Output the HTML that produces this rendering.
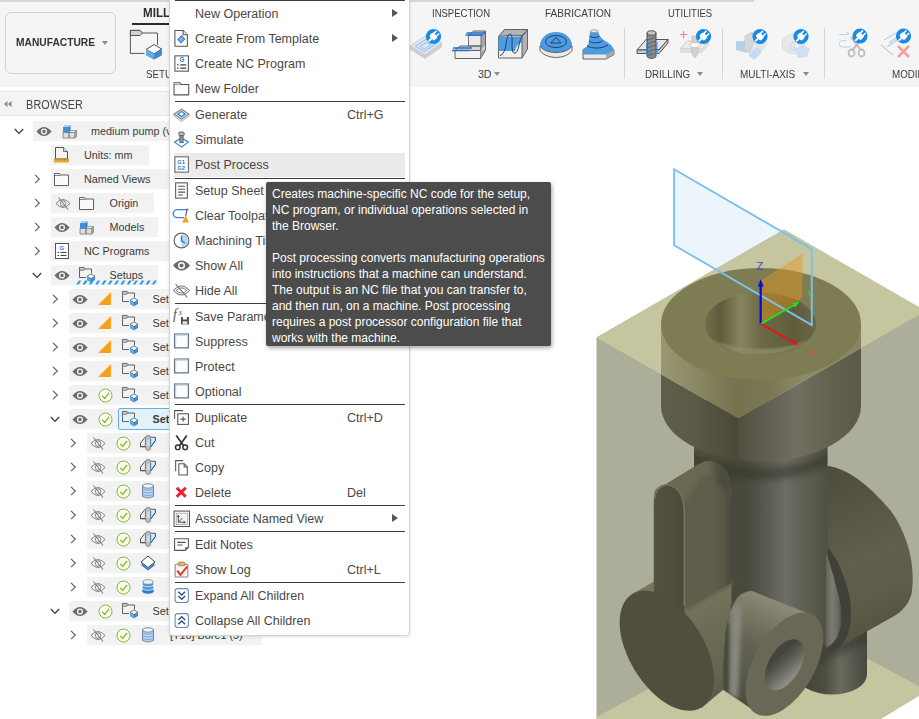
<!DOCTYPE html>
<html>
<head>
<meta charset="utf-8">
<style>
*{box-sizing:border-box;margin:0;padding:0}
html,body{width:919px;height:719px;overflow:hidden;background:#fff}
body{font-family:"Liberation Sans",sans-serif;position:relative;color:#3c3c3c}
.abs{position:absolute}
#topstrip{left:0;top:0;width:754px;height:2px;background:#d6d6d6}
#topstrip2{left:754px;top:0;width:165px;height:2px;background:#f5f5f5}
#toolbar{left:0;top:2px;width:919px;height:85px;background:#f5f5f5}
#wsbtn{left:5px;top:12px;width:111px;height:62px;border:1px solid #d2d2d2;border-radius:6px;background:#f5f5f5}
.tl{position:absolute;white-space:pre;line-height:1}
#brhead{left:0;top:91px;width:170px;height:25px;background:#f4f4f4;border-top:1px solid #e2e2e2;border-bottom:1px solid #e6e6e6}
.row{position:absolute;height:22px;background:#f0f0f0}
.rt{position:absolute;font-size:10.800px;line-height:1;white-space:pre;color:#3a3a3a}
svg{position:absolute;overflow:visible}
#menu{left:169px;top:-4px;width:241px;height:640px;background:#fff;border:1px solid #d4d4d4;border-radius:4px;box-shadow:0 1px 3px rgba(0,0,0,.13)}
.mi{position:absolute;left:25px;font-size:12.5px;line-height:1;white-space:pre;color:#484848}
.ms{position:absolute;left:177px;font-size:12.5px;line-height:1;white-space:pre;color:#484848}
.sep{position:absolute;left:4.500px;width:230.500px;height:1.6px;background:#3a3a3a}
.arr{position:absolute;left:222px;width:0;height:0;border-left:6px solid #555;border-top:4.5px solid transparent;border-bottom:4.5px solid transparent}
#tip{left:266px;top:182px;width:284.500px;height:164px;background:#4c4c4c;border-radius:2px;box-shadow:1px 2px 4px rgba(0,0,0,.35);color:#fff;font-size:12px;line-height:16px;padding:3.700px 0 0 6px;white-space:pre}
</style>
</head>
<body>
<!-- CANVAS -->
<div id="canvas" class="abs" style="left:0;top:0;width:919px;height:719px">
<svg style="left:0;top:0" width="919" height="719" viewBox="0 0 919 719">
<defs>
 <clipPath id="cTop"><path d="M596.5 337.500L784 229.500L925.500 311L738.500 418.500z"/></clipPath>
 <clipPath id="cFront"><path d="M596.500 337.500L738.500 418.500L925.500 311L930 311V730H596.500z"/></clipPath>
 <linearGradient id="gFl" gradientUnits="userSpaceOnUse" x1="661" y1="0" x2="861" y2="0">
  <stop offset="0" stop-color="#5e5d4a"/><stop offset=".15" stop-color="#5b5a47"/><stop offset=".385" stop-color="#4a4939"/>
  <stop offset=".39" stop-color="#504f3f"/><stop offset=".52" stop-color="#5f5e50"/><stop offset=".68" stop-color="#706f62"/>
  <stop offset=".84" stop-color="#64634f"/><stop offset="1" stop-color="#5a5947"/>
 </linearGradient>
 <linearGradient id="gFlT" gradientUnits="userSpaceOnUse" x1="661" y1="0" x2="861" y2="0">
  <stop offset="0" stop-color="#9a9872"/><stop offset=".12" stop-color="#908e68"/><stop offset=".38" stop-color="#74724f"/>
  <stop offset=".55" stop-color="#7a7855"/><stop offset=".72" stop-color="#8e8c68"/><stop offset="1" stop-color="#888660"/>
 </linearGradient>
 <linearGradient id="gHole" gradientUnits="userSpaceOnUse" x1="705" y1="0" x2="816" y2="0">
  <stop offset="0" stop-color="#706e49"/><stop offset=".14" stop-color="#5d5b3a"/><stop offset=".32" stop-color="#87855f"/>
  <stop offset=".5" stop-color="#6d6b46"/><stop offset=".8" stop-color="#5e5c3b"/><stop offset="1" stop-color="#69674a"/>
 </linearGradient>
 <linearGradient id="gBody" gradientUnits="userSpaceOnUse" x1="694" y1="0" x2="828" y2="0">
  <stop offset="0" stop-color="#525140"/><stop offset=".28" stop-color="#48473b"/><stop offset=".42" stop-color="#4c4b40"/>
  <stop offset=".68" stop-color="#6d6d65"/><stop offset=".85" stop-color="#5e5d51"/><stop offset="1" stop-color="#504f44"/>
 </linearGradient>
 <linearGradient id="gRibS" gradientUnits="userSpaceOnUse" x1="684" y1="0" x2="732" y2="0">
  <stop offset="0" stop-color="#5f5e4b"/><stop offset=".6" stop-color="#5f5e4a"/><stop offset=".85" stop-color="#575645"/><stop offset="1" stop-color="#48473a"/>
 </linearGradient>
 <linearGradient id="gRibF" gradientUnits="userSpaceOnUse" x1="654" y1="0" x2="685" y2="0">
  <stop offset="0" stop-color="#53523f"/><stop offset=".6" stop-color="#4f4e3d"/><stop offset="1" stop-color="#4b4a3a"/>
 </linearGradient>
 <linearGradient id="gHcyl" gradientUnits="userSpaceOnUse" x1="835" y1="465" x2="895" y2="615">
  <stop offset="0" stop-color="#4d4c3d"/><stop offset=".3" stop-color="#575645"/><stop offset=".6" stop-color="#605f4d"/><stop offset=".85" stop-color="#5d5c4a"/><stop offset="1" stop-color="#565544"/>
 </linearGradient>
 <linearGradient id="gStub" gradientUnits="userSpaceOnUse" x1="797" y1="0" x2="867" y2="0">
  <stop offset="0" stop-color="#44433a"/><stop offset=".4" stop-color="#4e4d42"/><stop offset=".62" stop-color="#6a6a5e"/><stop offset=".85" stop-color="#55544a"/><stop offset="1" stop-color="#4a493f"/>
 </linearGradient>
 <linearGradient id="gPort" gradientUnits="userSpaceOnUse" x1="800" y1="607" x2="750" y2="707">
  <stop offset="0" stop-color="#8f8e7d"/><stop offset=".1" stop-color="#868573"/><stop offset=".3" stop-color="#747361"/><stop offset=".5" stop-color="#626153"/>
  <stop offset=".75" stop-color="#59584c"/><stop offset="1" stop-color="#4c4b41"/>
 </linearGradient>
 <linearGradient id="gPhole" gradientUnits="userSpaceOnUse" x1="793" y1="640" x2="777" y2="690">
  <stop offset="0" stop-color="#4a493f"/><stop offset=".3" stop-color="#45443b"/><stop offset=".55" stop-color="#66655c"/><stop offset=".78" stop-color="#8e8e86"/><stop offset=".9" stop-color="#74736a"/><stop offset="1" stop-color="#6a695f"/>
 </linearGradient>
 <linearGradient id="gDcyl" gradientUnits="userSpaceOnUse" x1="690" y1="590" x2="740" y2="690">
  <stop offset="0" stop-color="#7a7862"/><stop offset=".35" stop-color="#6d6c56"/><stop offset=".75" stop-color="#66654f"/><stop offset="1" stop-color="#595845"/>
 </linearGradient>
 <filter id="b05" x="-20%" y="-20%" width="140%" height="140%"><feGaussianBlur stdDeviation=".5"/></filter>
 <filter id="b1" x="-30%" y="-30%" width="160%" height="160%"><feGaussianBlur stdDeviation="1"/></filter>
 <filter id="b2" x="-30%" y="-30%" width="160%" height="160%"><feGaussianBlur stdDeviation="2"/></filter>
 <filter id="b3" x="-30%" y="-30%" width="160%" height="160%"><feGaussianBlur stdDeviation="3"/></filter>
 <clipPath id="cRib"><path d="M666.700 483.800L699 464Q708 458.500 717.500 463Q730 470 731.500 489V583L684.500 609V511Q683 488 666.700 483.800z"/></clipPath>
 <clipPath id="cPort"><path d="M812 615L751.400 590.700Q742 592 736.900 598L729.700 611.400L725.500 632L723.500 663V690L756 712z"/></clipPath>
 <linearGradient id="gFil" gradientUnits="userSpaceOnUse" x1="824" y1="0" x2="842" y2="0">
  <stop offset="0" stop-color="#5d5c50"/><stop offset=".45" stop-color="#7c7b6f"/><stop offset=".75" stop-color="#6e6d61"/><stop offset="1" stop-color="#4e4d43"/>
 </linearGradient>
 <clipPath id="cHole"><ellipse cx="760.500" cy="324" rx="55.500" ry="31.500"/></clipPath>
 <clipPath id="cStub"><path d="M797 630H867V674.500A35 20 0 01797 674.500z"/></clipPath>
 <clipPath id="cBody"><path d="M694 400H827.500V560H694z"/></clipPath>
 <clipPath id="cRibF"><path d="M653.800 640V497Q654 486 666.700 484Q684 486 685.300 511V640z"/></clipPath>
</defs>
<path d="M674.100 169.200L811.800 249.100V325L674.100 245.200z" fill="#ecf5fc"/>
<!-- stock box -->
<path d="M596.500 337.500L784 229.500L925.500 311L930 311V730H596.500z" fill="#adae9a"/>
<path d="M596.500 337.500L784 229.500L925.500 311L738.500 418.500z" fill="#c5c59f"/>
<path d="M596.500 717L786 614.700L927.200 690.700L870 725H596.500z" fill="#c5c5a0"/>
<path d="M919 695.700L880.700 719H919z" fill="#fff"/>

<!-- stub cylinder -->
<path d="M797 630H867V674.500A35 20 0 01797 674.500z" fill="url(#gStub)"/>
<g clip-path="url(#cStub)"><path d="M790 655L875 616V640L790 676z" fill="#3b3a32" opacity=".6" filter="url(#b3)"/></g>
<!-- far end of horizontal cylinder -->
<path d="M826 466C846 466.500 870 486 891 511C908 535 916 566 911.500 594C908 607 899 614 888 619.500L826 654.500V466z" fill="url(#gHcyl)"/>
<!-- body cylinder -->
<path d="M694 400H827.500V650H694z" fill="url(#gBody)"/>
<path d="M810 640L828 646L840 647L826 655L810 663z" fill="#444339"/>
<!-- fillet -->
<path d="M827.800 546.700C832 553 835 558 837.900 562.300C842 572 844 577 845.700 582.400C848 590 849.500 595 850 600C851 606 851 612 850.800 618C850.500 624 849.500 629 847.900 633.600C846 639 843 643.500 840 647C836 650 832 652 826 653.600z" fill="#424139"/>
<path d="M826 553C829 560 831 568 833.400 575.700C835 582 836.500 588 837.900 593.500C839.500 599 840.500 604 841.200 609C841.800 614 841.800 620 841.200 624.700C840 630 838.500 634 836.700 638C834 642 831 645 826 648z" fill="url(#gFil)"/>
<g clip-path="url(#cBody)"><path d="M661 405.500A100 56 0 00861 405.500V418A100 56 0 01661 418z" fill="#35342b" opacity=".55" filter="url(#b3)" transform="translate(0 6)"/></g>
<!-- flange (front colours) -->
<g clip-path="url(#cFront)">
 <path d="M661 324V405.500A100 56 0 00861 405.500V324z" fill="url(#gFl)"/>
</g>
<g clip-path="url(#cTop)">
 <path d="M661 324V405.500A100 56 0 00861 405.500V324z" fill="url(#gFlT)"/>
 <ellipse cx="761" cy="324" rx="100" ry="56" fill="#7e7c53"/>
 <ellipse cx="760.500" cy="324" rx="55.500" ry="31.500" fill="url(#gHole)"/>
 <path d="M712 339A55.500 31.500 0 00809 339A58 22 0 01712 339z" fill="#8f8d68" opacity=".8" filter="url(#b1)" clip-path="url(#cHole)"/>
</g>
<!-- horizontal cylinder near side -->
<path d="M684 607L731.500 581V603L726 630L724 689L701.500 708L660 650z" fill="url(#gDcyl)"/>
<path d="M684.500 600L731.500 574V586L684.500 612z" fill="#65644e" filter="url(#b2)"/>
<path d="M632.300 594L654 581.500V620H640z" fill="#77755f"/>
<!-- rib -->
<path d="M666.700 483.800L699 464Q708 458.500 717.500 463Q730 470 731.500 489V583L684.500 609V511Q683 488 666.700 483.800z" fill="url(#gRibS)"/>
<g clip-path="url(#cRib)"><path d="M660 482L699 460Q709 454 720 459Q734 467 736 488L731.500 500Q728 481 715 475Q707 473 699 478L684 505Q680 492 660 490z" fill="#696852" filter="url(#b2)"/></g>
<g clip-path="url(#cRib)"><ellipse cx="737" cy="463" rx="24" ry="30" fill="#33322a" opacity=".5" filter="url(#b3)"/></g>
<path d="M653.800 640V497Q654 486 666.700 484Q684 486 684.500 511V640z" fill="url(#gRibF)"/>
<g clip-path="url(#cRibF)"><path d="M654.600 499Q655 487 666.700 484.500Q683.500 486.500 684.300 511V606" fill="none" stroke="#787763" stroke-width="1.500" filter="url(#b05)"/></g>
<!-- disc -->
<ellipse cx="666.800" cy="650.700" rx="66.400" ry="37.600" transform="rotate(58.700 666.800 650.700)" fill="#504e3c"/>
<!-- small port -->
<path d="M812 615L751.400 590.700Q742 592 736.900 598L729.700 611.400L725.500 632L723.500 663V690L756 712z" fill="url(#gPort)"/>
<g clip-path="url(#cPort)"><path d="M731.500 606L742 604L738 699L729 694z" fill="#87877b" filter="url(#b2)"/><path d="M721 630L728.500 622L728 692L721 690z" fill="#4a4940" filter="url(#b1)"/></g>
<ellipse cx="784.300" cy="664.200" rx="57" ry="30.500" transform="rotate(-60 784.300 664.200)" fill="#696857"/>
<ellipse cx="784.500" cy="664.700" rx="28" ry="15.700" transform="rotate(-60 784.500 664.700)" fill="url(#gPhole)"/>

<!-- planes & axes -->
<path d="M761.500 324L761.500 280L802.300 254L802.300 298z" fill="#e4961c" fill-opacity=".45"/>
<path d="M674.100 169.200L811.800 249.100V325L674.100 245.200z" fill="none" stroke="#7cc1e9" stroke-width="1.900"/>
<path d="M760.700 324.500V285" stroke="#0808e0" stroke-width="2.200"/><path d="M760.700 279.500l-3 7h6z" fill="#0808e0"/>
<path d="M760.700 324L794 305" stroke="#22e422" stroke-width="1.700"/><path d="M800 301.600l-7.500 1.400 2.600 4.600z" fill="#22e422"/>
<path d="M760.700 324L792 341.500" stroke="#ec1414" stroke-width="2"/><path d="M798.500 345l-4.600-5.800-2.800 4.900z" fill="#ec1414"/>
<text x="756.500" y="270" font-size="11" fill="#4a48b8" font-family="Liberation Sans">Z</text>
<text x="807.500" y="295.500" font-size="8" fill="#3fcf60" font-family="Liberation Sans">Y</text>
<text x="808.500" y="356" font-size="9" fill="#e04848" font-family="Liberation Sans">X</text>
</svg>

</div>

<!-- TOOLBAR -->
<div id="topstrip" class="abs"></div><div id="topstrip2" class="abs"></div>
<div id="toolbar" class="abs"></div>
<div id="wsbtn" class="abs"></div>
<div class="tl" style="left:16px;top:37px;font-size:11.5px;font-weight:700;color:#333;transform:scaleX(.89);transform-origin:0 50%">MANUFACTURE</div>
<div class="abs" style="left:102px;top:41px;width:0;height:0;border-top:4px solid #8a8a8a;border-left:3.5px solid transparent;border-right:3.5px solid transparent"></div>
<div class="tl" style="left:143px;top:7px;font-size:12.5px;font-weight:700;color:#2e2e2e;transform:scaleX(.93);transform-origin:0 50%">MILLING</div>
<div class="abs" style="left:131.500px;top:22.500px;width:60px;height:2.700px;background:#2a2a2a"></div>
<div class="tl" style="left:146px;top:69px;font-size:10.5px;color:#3c3c3c;transform:scaleX(.93);transform-origin:0 50%">SETUP</div>
<!-- setup icon -->
<svg style="left:128px;top:28px" width="36" height="34" viewBox="0 0 36 34">
 <path d="M16.500 25.400H2.400V2.400H12L14.500 5H29.500V16.700" fill="none" stroke="#555" stroke-width="1"/>
 <path d="M2.400 2.400H12L14.500 5L12 7.500H2.400z" fill="#d2d2d2" stroke="#555" stroke-width="1"/>
 <path d="M26 16.500l7.700 4.500v6.200l-7.700 4.400-7.800-4.400v-6.200z" fill="#4a9ad8"/>
 <path d="M26 16.500l7.700 4.500-7.700 4.800-7.800-4.300z" fill="#fbfdff" stroke="#444" stroke-width=".9" stroke-linejoin="round"/>
 <path d="M26 25.800l7.700-4.800v6.200l-7.700 4.400z" fill="#3c8ccf"/>
 <path d="M26 25.800l-7.800-4.300v5.700l7.800 4.400z" fill="#62ace4"/>
</svg>
<div class="tl" style="left:432px;top:8px;font-size:10.5px;color:#3c3c3c;transform:scaleX(.905);transform-origin:0 50%">INSPECTION</div>
<div class="tl" style="left:545px;top:8px;font-size:10.5px;color:#3c3c3c;transform:scaleX(.955);transform-origin:0 50%">FABRICATION</div>
<div class="tl" style="left:668px;top:8px;font-size:10.5px;color:#3c3c3c;transform:scaleX(.90);transform-origin:0 50%">UTILITIES</div>
<div class="tl" style="left:478px;top:69px;font-size:10.5px;color:#3c3c3c">3D</div>
<div class="abs" style="left:494px;top:72px;width:0;height:0;border-top:4px solid #8a8a8a;border-left:3px solid transparent;border-right:3px solid transparent"></div>
<div class="tl" style="left:645px;top:69px;font-size:10.5px;color:#3c3c3c;transform:scaleX(.93);transform-origin:0 50%">DRILLING</div>
<div class="abs" style="left:697px;top:72px;width:0;height:0;border-top:4px solid #8a8a8a;border-left:3px solid transparent;border-right:3px solid transparent"></div>
<div class="tl" style="left:740px;top:69px;font-size:10.5px;color:#3c3c3c;transform:scaleX(.95);transform-origin:0 50%">MULTI-AXIS</div>
<div class="abs" style="left:803px;top:72px;width:0;height:0;border-top:4px solid #8a8a8a;border-left:3px solid transparent;border-right:3px solid transparent"></div>
<div class="tl" style="left:892px;top:69px;font-size:10.5px;color:#3c3c3c;transform:scaleX(.93);transform-origin:0 50%">MODIFY</div>
<div class="abs" style="left:624px;top:28px;width:1px;height:51px;background:#d6d6d6"></div>
<div class="abs" style="left:722px;top:28px;width:1px;height:51px;background:#d6d6d6"></div>
<div class="abs" style="left:824px;top:28px;width:1px;height:51px;background:#d6d6d6"></div>
<!--ICONS-->
<svg style="left:0;top:0" width="919" height="90" viewBox="0 0 919 90">
<!-- 1 adaptive faded -->
<g opacity=".85"><path d="M410 46l17-11 15 8-17 12z" fill="#d6e3f0" stroke="#b8c0c8" stroke-width=".8"/><path d="M410 46v3.500l15 9.500v-4zM425 55v4l17-12v-4z" fill="#c4c8cc"/><path d="M415.500 46.200l11-7 9 4.800-11 7.500z" fill="none" stroke="#7db4e6" stroke-width="1"/><path d="M420 46.300l6.500-4 4.500 2.500-6.500 4.300z" fill="none" stroke="#7db4e6" stroke-width=".9"/></g>
<g transform="translate(433.5 36.5)"><circle r="7.600" fill="#168ae6"/><g transform="rotate(45) scale(1.220)" fill="#fff" stroke="none"><rect x="-2.900" y="-2.200" width="5.800" height="4.600" rx="1.400"/><rect x="-2.200" y="-5" width="1.300" height="3.200"/><rect x=".9" y="-5" width="1.300" height="3.200"/><rect x="-.8" y="2" width="1.600" height="3.600"/></g></g>
<!-- 2 steps -->
<path d="M455 50.500l5-4.500h8.500v-10.500l5-4.500h12v19l-5.500 8.500h-25z" fill="#d6d6d6"/>
<path d="M455 50.500h25.500v8H455z" fill="#f1f1f1" stroke="#555" stroke-width=".9"/><path d="M480.500 50.500l5-5.500v-14l-4.500 4.500v7.500l-.5 8v7.500l5-8.500" fill="#a9a9a9"/>
<path d="M468.500 35.500h12.500v10.500h-12.500z" fill="#ececec" stroke="#555" stroke-width=".8"/>
<path d="M455 50.500l5-4.500h21l-.5 4.500M468.500 35.500l5-4.500h12l-4.500 4.500M485.500 31v19l-5 8.500" fill="none" stroke="#555" stroke-width=".9"/>
<path d="M466.500 33h19M465.500 35h17.500M453 48h19M452 50.500h17.500" stroke="#1f72c8" stroke-width="1.500"/>
<!-- 3 parallel -->
<path d="M498.500 36l6-6.500h23v19.500l-5.500 9h-23.500z" fill="#b4b4b4"/>
<path d="M498.500 58V36.500q11-2 23.500-1V58z" fill="#f0f0f0" stroke="#555" stroke-width=".9"/>
<path d="M498.500 36.500l6-7h23l-5.500 6.500M527.500 29.500v19.500l-5.500 9" fill="none" stroke="#555" stroke-width=".9"/>
<path d="M498.500 36.500h23.500v6q-6 1.500-7 8.500h-16.500z" fill="#4f9be0"/>
<path d="M500 55.500c5-2 5.500-8 6.500-14s3-9 4.500-7 1 7 1 12 1.500 8 4 6 3-9 4.500-13 3-6 5-6.500" fill="none" stroke="#1a3f78" stroke-width="1"/>
<!-- 4 dome -->
<path d="M540 46v4.500c3 5 11 7 16.500 7s13-2.500 15.500-7V46z" fill="#eaeaea" stroke="#555" stroke-width=".9"/>
<path d="M540 46c0-8 7-14 16-14s16 6 16 14c-3 4.500-9.500 6.500-16 6.500s-13-2-16-6.500z" fill="#4f9be0"/>
<path d="M540 46c3 4.500 9.500 6.500 16 6.500s13-2 16-6.500" fill="none" stroke="#555" stroke-width=".9"/>
<ellipse cx="556" cy="41.500" rx="10.500" ry="6" fill="none" stroke="#1a3f78" stroke-width="1"/>
<path d="M556 37.500l5 5.500h-10.500z" fill="none" stroke="#1a3f78" stroke-width="1" stroke-linejoin="round"/>
<!-- 5 contour -->
<path d="M583 49.500l8-4.500h14l9 5v4.500l-8 4.500h-23z" fill="#eaeaea" stroke="#555" stroke-width=".9"/><path d="M606 58.500v-4.500l8-4.500v4.500z" fill="#a9a9a9"/>
<path d="M583 49.500c4-1 5.500-5 6-9s.5-7 1.500-9.500c2-1.500 5.500-1.500 7.500 0 1 4 3 7.500 6.500 9.500s8 4.500 9.500 9.500l-8 4.500h-23z" fill="#4f9be0"/>
<ellipse cx="594.200" cy="31.200" rx="3.700" ry="1.500" fill="#e8e8e8" stroke="#777" stroke-width=".6"/>
<path d="M589.500 36c2.500 2 7 2 9.500 0M589 41c3 2.500 9 2.500 13.500 0M587 45.500c4.500 3.500 15 3.500 21-.5" fill="none" stroke="#1a3f78" stroke-width="1"/>
<!-- 6 drill -->
<path d="M637 50l9-10.500h22l-9 10.500z" fill="#e8e8e8" stroke="#444" stroke-width=".9"/><path d="M637 50v3.500h22l9-10.500v-3.500l-9 10.500z" fill="#cfcfcf" stroke="#444" stroke-width=".9"/>
<path d="M647 33v23.500c2 2.500 7 2.500 9 0V33z" fill="#8c8c8c" stroke="#444" stroke-width=".9"/><ellipse cx="651.500" cy="33" rx="4.500" ry="2.200" fill="#c6c6c6" stroke="#444" stroke-width=".9"/>
<path d="M647.500 40l8-3M647.500 44l8-3M647.500 48l8-3M647.500 52l8-3M647.500 56l8-3" stroke="#555" stroke-width=".8"/>
<path d="M646.500 44v9.500h10.500V42" fill="none" stroke="#2f8be0" stroke-width="1"/>
<!-- 7 hole recog faded -->
<g opacity=".5"><path d="M680 49l7-8h22l-7 8z" fill="#e2e2e2" stroke="#888" stroke-width=".8"/><path d="M680 49v4h22l7-8v-4l-7 8z" fill="#c8c8c8"/><path d="M692 36v18l3 4 3-4V36z" fill="#b0b0b0" stroke="#888" stroke-width=".7"/><ellipse cx="695" cy="45" rx="5" ry="2.500" fill="#fff" stroke="#888" stroke-width=".7"/></g>
<path d="M680 34.500h7M683.500 31v7" stroke="#e88a8a" stroke-width="1.200"/>
<g transform="translate(703.5 36.5)"><circle r="7.600" fill="#168ae6"/><g transform="rotate(45) scale(1.220)" fill="#fff" stroke="none"><rect x="-2.900" y="-2.200" width="5.800" height="4.600" rx="1.400"/><rect x="-2.200" y="-5" width="1.300" height="3.200"/><rect x=".9" y="-5" width="1.300" height="3.200"/><rect x="-.8" y="2" width="1.600" height="3.600"/></g></g>
<!-- 8 multiaxis 1 faded -->
<g opacity=".55"><path d="M736 41h11v12l-11-3z" fill="#7ab6ea"/><path d="M747 41l14-5 7 8-12 14-9-5z" fill="#d4dbe2"/><path d="M745 36l7-4 4 3-6 17-6-2z" fill="#c0c0c0" stroke="#999" stroke-width=".6"/><path d="M748 55l10-8 4 5-8 8z" fill="#9cc8ee"/></g>
<g transform="translate(760 36.5)"><circle r="7.600" fill="#168ae6"/><g transform="rotate(45) scale(1.220)" fill="#fff" stroke="none"><rect x="-2.900" y="-2.200" width="5.800" height="4.600" rx="1.400"/><rect x="-2.200" y="-5" width="1.300" height="3.200"/><rect x=".9" y="-5" width="1.300" height="3.200"/><rect x="-.8" y="2" width="1.600" height="3.600"/></g></g>
<!-- 9 multiaxis 2 faded -->
<g opacity=".5"><ellipse cx="793" cy="44" rx="11" ry="9.500" fill="#dcdcdc" stroke="#b0b0b0" stroke-width=".8"/><ellipse cx="796" cy="46" rx="6" ry="4.500" fill="none" stroke="#8fb8dc" stroke-width="1"/><path d="M794 48l10-3 6 4-3 8-9 1z" fill="#a9cdea"/><ellipse cx="797" cy="46" rx="3" ry="2" fill="#fff" stroke="#999" stroke-width=".6"/></g>
<g transform="translate(801 36.5)"><circle r="7.600" fill="#168ae6"/><g transform="rotate(45) scale(1.220)" fill="#fff" stroke="none"><rect x="-2.900" y="-2.200" width="5.800" height="4.600" rx="1.400"/><rect x="-2.200" y="-5" width="1.300" height="3.200"/><rect x=".9" y="-5" width="1.300" height="3.200"/><rect x="-.8" y="2" width="1.600" height="3.600"/></g></g>
<!-- 10 scissors faded -->
<g opacity=".6"><path d="M839 34.500h10l-2-2.500M846 40.500h-3.500a3.200 3.200 0 000 6.500h8" fill="none" stroke="#8fb8dc" stroke-width="1"/><path d="M851 37l9.500 13M863 37l-10.500 13" stroke="#9a9a9a" stroke-width="2"/><ellipse cx="851.500" cy="53" rx="3" ry="3.500" fill="none" stroke="#9a9a9a" stroke-width="1.800"/><ellipse cx="861.500" cy="53" rx="3" ry="3.500" fill="none" stroke="#9a9a9a" stroke-width="1.800"/></g>
<g transform="translate(860 36)"><circle r="7.600" fill="#168ae6"/><g transform="rotate(45) scale(1.220)" fill="#fff" stroke="none"><rect x="-2.900" y="-2.200" width="5.800" height="4.600" rx="1.400"/><rect x="-2.200" y="-5" width="1.300" height="3.200"/><rect x=".9" y="-5" width="1.300" height="3.200"/><rect x="-.8" y="2" width="1.600" height="3.600"/></g></g>
<!-- 11 delete toolpath faded -->
<g opacity=".6"><path d="M881 45l12 10M884 40l12-7c3-1 4 2 2 3.500l-9 6.500M887 47l11-8" fill="none" stroke="#8fb8dc" stroke-width="1.200"/><path d="M898 46l11 11M909 46l-11 11" stroke="#e86a6a" stroke-width="2.600"/></g>
<g transform="translate(903.5 36)"><circle r="7.600" fill="#168ae6"/><g transform="rotate(45) scale(1.220)" fill="#fff" stroke="none"><rect x="-2.900" y="-2.200" width="5.800" height="4.600" rx="1.400"/><rect x="-2.200" y="-5" width="1.300" height="3.200"/><rect x=".9" y="-5" width="1.300" height="3.200"/><rect x="-.8" y="2" width="1.600" height="3.600"/></g></g>
</svg>


<!-- BROWSER -->
<div id="brhead" class="abs"></div>
<svg style="left:3.500px;top:101px" width="8" height="6" viewBox="0 0 8 6"><path d="M3.500 0v6L0 3zM7.500 0v6L4 3z" fill="#858585"/></svg>
<div class="tl" style="left:25.500px;top:98.800px;font-size:12.500px;color:#444;transform:scaleX(.865);transform-origin:0 50%;letter-spacing:.2px">BROWSER</div>
<div class="row" style="left:33px;top:120.5px;width:137px;height:20px;background:#f2f2f2"></div>
<svg style="left:14px;top:128px" width="10" height="7" viewBox="0 0 10 7"><path d="M.8 1l4.200 4.400 4.200-4.400" fill="none" stroke="#3c3c3c" stroke-width="1.300"/></svg>
<svg style="left:36px;top:124.5px" width="16" height="13" viewBox="0 0 16 13"><path d="M.5 6.500q7.500-9 15 0q-7.500 9-15 0z" fill="#6b6b6b"/><circle cx="8" cy="6.500" r="3.100" fill="#f0f0f0"/><circle cx="8" cy="6.500" r="1.700" fill="#6b6b6b"/></svg>
<svg style="left:61.5px;top:123.5px" width="15" height="15" viewBox="0 0 15 15"><path d="M1 3h6v5.500H1z" fill="#3a90e0"/><path d="M1 3l1.500-2h6L7 3z" fill="#a4d4f9"/><path d="M7 3l1.500-2v5.500L7 8.500z" fill="#2a78c8"/><path d="M1 8.500h6V14H1zM7 8.500h6V14H7z" fill="#dedede" stroke="#777" stroke-width=".8"/><path d="M7 8.500l1.500-2h6L13 8.500z" fill="#f0f0f0" stroke="#777" stroke-width=".7"/><path d="M13 8.500l1.500-2V12L13 14z" fill="#b8b8b8" stroke="#777" stroke-width=".7"/></svg>
<div class="rt" style="left:91px;top:125.5px">medium pump (v1</div>
<div class="row" style="left:51px;top:144.5px;width:98px;height:20px;background:#f2f2f2"></div>
<svg style="left:54px;top:147px" width="15" height="16" viewBox="0 0 15 16"><path d="M1.500 .5h8l4 4v7.500h-12z" fill="#f4f4f4" stroke="#555"/><path d="M9.500 .5v4h4" fill="#ddd" stroke="#555" stroke-width=".8"/><rect x=".5" y="12" width="14" height="3" fill="#f0b429" stroke="#c98a10" stroke-width=".6"/><path d="M3 12v1.500M5.500 12v1.500M8 12v1.500M10.500 12v1.500M13 12v1.500" stroke="#8a5a00" stroke-width=".6"/></svg>
<div class="rt" style="left:84px;top:149.5px">Units: mm</div>
<div class="row" style="left:51px;top:168.5px;width:119px;height:20px;background:#f2f2f2"></div>
<svg style="left:34px;top:174px" width="7" height="10" viewBox="0 0 7 10"><path d="M1 .8l4.400 4.200-4.400 4.200" fill="none" stroke="#5a5a5a" stroke-width="1.050"/></svg>
<svg style="left:54px;top:172px" width="15" height="14" viewBox="0 0 15 14"><path d="M.5 1.500h5l1 1.500h8v10.500h-14z" fill="#fafafa" stroke="#606060"/><path d="M.5 3.500h6" stroke="#606060" stroke-width=".8"/></svg>
<div class="rt" style="left:84px;top:173.5px">Named Views</div>
<div class="row" style="left:51px;top:192.5px;width:103px;height:20px;background:#f2f2f2"></div>
<svg style="left:34px;top:198px" width="7" height="10" viewBox="0 0 7 10"><path d="M1 .8l4.400 4.200-4.400 4.200" fill="none" stroke="#5a5a5a" stroke-width="1.050"/></svg>
<svg style="left:55px;top:196.5px" width="16" height="13" viewBox="0 0 16 13"><path d="M1 6.500q7-8 14 0q-7 8-14 0z" fill="none" stroke="#808080" stroke-width="1"/><circle cx="8" cy="6.500" r="2.700" fill="none" stroke="#808080"/><path d="M3.500 .5l9.500 12" stroke="#808080" stroke-width="1.100"/></svg>
<svg style="left:79px;top:196px" width="15" height="14" viewBox="0 0 15 14"><path d="M.5 1.500h5l1 1.500h8v10.500h-14z" fill="#fafafa" stroke="#606060"/><path d="M.5 3.500h6" stroke="#606060" stroke-width=".8"/></svg>
<div class="rt" style="left:109.5px;top:197.5px">Origin</div>
<div class="row" style="left:51px;top:216.5px;width:107px;height:20px;background:#f2f2f2"></div>
<svg style="left:34px;top:222px" width="7" height="10" viewBox="0 0 7 10"><path d="M1 .8l4.400 4.200-4.400 4.200" fill="none" stroke="#5a5a5a" stroke-width="1.050"/></svg>
<svg style="left:54px;top:220.5px" width="16" height="13" viewBox="0 0 16 13"><path d="M.5 6.500q7.500-9 15 0q-7.500 9-15 0z" fill="#6b6b6b"/><circle cx="8" cy="6.500" r="3.100" fill="#f0f0f0"/><circle cx="8" cy="6.500" r="1.700" fill="#6b6b6b"/></svg>
<svg style="left:78.5px;top:219.5px" width="15" height="15" viewBox="0 0 15 15"><path d="M1 3h6v5.500H1z" fill="#3a90e0"/><path d="M1 3l1.500-2h6L7 3z" fill="#a4d4f9"/><path d="M7 3l1.500-2v5.500L7 8.500z" fill="#2a78c8"/><path d="M1 8.500h6V14H1zM7 8.500h6V14H7z" fill="#dedede" stroke="#777" stroke-width=".8"/><path d="M7 8.500l1.500-2h6L13 8.500z" fill="#f0f0f0" stroke="#777" stroke-width=".7"/><path d="M13 8.500l1.500-2V12L13 14z" fill="#b8b8b8" stroke="#777" stroke-width=".7"/></svg>
<div class="rt" style="left:109.5px;top:221.5px">Models</div>
<div class="row" style="left:51px;top:240.5px;width:119px;height:20px;background:#f2f2f2"></div>
<svg style="left:34px;top:246px" width="7" height="10" viewBox="0 0 7 10"><path d="M1 .8l4.400 4.200-4.400 4.200" fill="none" stroke="#5a5a5a" stroke-width="1.050"/></svg>
<svg style="left:55px;top:243px" width="14" height="16" viewBox="0 0 14 16"><rect x=".5" y=".5" width="13" height="15" fill="#fafafa" stroke="#555"/><text x="4.500" y="7" font-size="6" font-weight="700" fill="#2f7fd0" font-family="Liberation Sans">G</text><path d="M2.500 9.500h1.500M5.500 9.500h6M2.500 12.500h1.500M5.500 12.500h6" stroke="#444" stroke-width="1.100"/></svg>
<div class="rt" style="left:84px;top:245.5px">NC Programs</div>
<div class="row" style="left:51px;top:264.5px;width:107px;height:20px;background:#f2f2f2"></div>
<svg style="left:32px;top:272px" width="10" height="7" viewBox="0 0 10 7"><path d="M.8 1l4.200 4.400 4.200-4.400" fill="none" stroke="#3c3c3c" stroke-width="1.300"/></svg>
<svg style="left:54px;top:268.5px" width="16" height="13" viewBox="0 0 16 13"><path d="M.5 6.500q7.500-9 15 0q-7.500 9-15 0z" fill="#6b6b6b"/><circle cx="8" cy="6.500" r="3.100" fill="#f0f0f0"/><circle cx="8" cy="6.500" r="1.700" fill="#6b6b6b"/></svg>
<svg style="left:79px;top:266px" width="17" height="17" viewBox="0 0 17 17"><path d="M7 11.500H.5V1.500h4.500l1.200 1.500h6.300v4.500" fill="none" stroke="#606060"/><path d="M.5 1.500h4.500l1.200 1.500-1.200 1.200H.5z" fill="#cfcfcf" stroke="#606060" stroke-width=".8"/><path d="M12 8l4 2.200v3.800l-4 2.200-4-2.200v-3.800z" fill="#3d8fd6"/><path d="M12 8l4 2.200-4 2.400-4-2.400z" fill="#fbfdff" stroke="#555" stroke-width=".7" stroke-linejoin="round"/><path d="M12 12.600v3.600l-4-2.200v-3.800z" fill="#5aa6e4"/></svg>
<div class="rt" style="left:109.5px;top:269.5px">Setups</div>
<svg style="left:76px;top:280px" width="82" height="5" viewBox="0 0 82 5"><defs><pattern id="hp" width="6.300" height="5" patternUnits="userSpaceOnUse"><path d="M.3 4.500l2.600-4h2.300l-2.600 4z" fill="#1a8fe0"/></pattern></defs><rect width="82" height="5" fill="url(#hp)"/></svg>
<div class="row" style="left:69px;top:288.5px;width:101px;height:20px;background:#f2f2f2"></div>
<svg style="left:52px;top:294px" width="7" height="10" viewBox="0 0 7 10"><path d="M1 .8l4.400 4.200-4.400 4.200" fill="none" stroke="#5a5a5a" stroke-width="1.050"/></svg>
<svg style="left:72px;top:292.5px" width="16" height="13" viewBox="0 0 16 13"><path d="M.5 6.500q7.500-9 15 0q-7.500 9-15 0z" fill="#6b6b6b"/><circle cx="8" cy="6.500" r="3.100" fill="#f0f0f0"/><circle cx="8" cy="6.500" r="1.700" fill="#6b6b6b"/></svg>
<svg style="left:98px;top:292px" width="13" height="13" viewBox="0 0 13 13"><path d="M0 13L13 0v13z" fill="#f5a21c"/></svg>
<svg style="left:122px;top:290px" width="17" height="17" viewBox="0 0 17 17"><path d="M7 11.500H.5V1.500h4.500l1.200 1.500h6.300v4.500" fill="none" stroke="#606060"/><path d="M.5 1.500h4.500l1.200 1.500-1.200 1.200H.5z" fill="#cfcfcf" stroke="#606060" stroke-width=".8"/><path d="M12 8l4 2.200v3.800l-4 2.200-4-2.200v-3.800z" fill="#3d8fd6"/><path d="M12 8l4 2.200-4 2.400-4-2.400z" fill="#fbfdff" stroke="#555" stroke-width=".7" stroke-linejoin="round"/><path d="M12 12.600v3.600l-4-2.200v-3.800z" fill="#5aa6e4"/></svg>
<div class="rt" style="left:152.5px;top:293.5px">Setup</div>
<div class="row" style="left:69px;top:312.5px;width:101px;height:20px;background:#f2f2f2"></div>
<svg style="left:52px;top:318px" width="7" height="10" viewBox="0 0 7 10"><path d="M1 .8l4.400 4.200-4.400 4.200" fill="none" stroke="#5a5a5a" stroke-width="1.050"/></svg>
<svg style="left:72px;top:316.5px" width="16" height="13" viewBox="0 0 16 13"><path d="M.5 6.500q7.500-9 15 0q-7.500 9-15 0z" fill="#6b6b6b"/><circle cx="8" cy="6.500" r="3.100" fill="#f0f0f0"/><circle cx="8" cy="6.500" r="1.700" fill="#6b6b6b"/></svg>
<svg style="left:98px;top:316px" width="13" height="13" viewBox="0 0 13 13"><path d="M0 13L13 0v13z" fill="#f5a21c"/></svg>
<svg style="left:122px;top:314px" width="17" height="17" viewBox="0 0 17 17"><path d="M7 11.500H.5V1.500h4.500l1.200 1.500h6.300v4.500" fill="none" stroke="#606060"/><path d="M.5 1.500h4.500l1.200 1.500-1.200 1.200H.5z" fill="#cfcfcf" stroke="#606060" stroke-width=".8"/><path d="M12 8l4 2.200v3.800l-4 2.200-4-2.200v-3.800z" fill="#3d8fd6"/><path d="M12 8l4 2.200-4 2.400-4-2.400z" fill="#fbfdff" stroke="#555" stroke-width=".7" stroke-linejoin="round"/><path d="M12 12.600v3.600l-4-2.200v-3.800z" fill="#5aa6e4"/></svg>
<div class="rt" style="left:152.5px;top:317.5px">Setup</div>
<div class="row" style="left:69px;top:336.5px;width:101px;height:20px;background:#f2f2f2"></div>
<svg style="left:52px;top:342px" width="7" height="10" viewBox="0 0 7 10"><path d="M1 .8l4.400 4.200-4.400 4.200" fill="none" stroke="#5a5a5a" stroke-width="1.050"/></svg>
<svg style="left:72px;top:340.5px" width="16" height="13" viewBox="0 0 16 13"><path d="M.5 6.500q7.500-9 15 0q-7.500 9-15 0z" fill="#6b6b6b"/><circle cx="8" cy="6.500" r="3.100" fill="#f0f0f0"/><circle cx="8" cy="6.500" r="1.700" fill="#6b6b6b"/></svg>
<svg style="left:98px;top:340px" width="13" height="13" viewBox="0 0 13 13"><path d="M0 13L13 0v13z" fill="#f5a21c"/></svg>
<svg style="left:122px;top:338px" width="17" height="17" viewBox="0 0 17 17"><path d="M7 11.500H.5V1.500h4.500l1.200 1.500h6.300v4.500" fill="none" stroke="#606060"/><path d="M.5 1.500h4.500l1.200 1.500-1.200 1.200H.5z" fill="#cfcfcf" stroke="#606060" stroke-width=".8"/><path d="M12 8l4 2.200v3.800l-4 2.200-4-2.200v-3.800z" fill="#3d8fd6"/><path d="M12 8l4 2.200-4 2.400-4-2.400z" fill="#fbfdff" stroke="#555" stroke-width=".7" stroke-linejoin="round"/><path d="M12 12.600v3.600l-4-2.200v-3.800z" fill="#5aa6e4"/></svg>
<div class="rt" style="left:152.5px;top:341.5px">Setup</div>
<div class="row" style="left:69px;top:360.5px;width:101px;height:20px;background:#f2f2f2"></div>
<svg style="left:52px;top:366px" width="7" height="10" viewBox="0 0 7 10"><path d="M1 .8l4.400 4.200-4.400 4.200" fill="none" stroke="#5a5a5a" stroke-width="1.050"/></svg>
<svg style="left:72px;top:364.5px" width="16" height="13" viewBox="0 0 16 13"><path d="M.5 6.500q7.500-9 15 0q-7.500 9-15 0z" fill="#6b6b6b"/><circle cx="8" cy="6.500" r="3.100" fill="#f0f0f0"/><circle cx="8" cy="6.500" r="1.700" fill="#6b6b6b"/></svg>
<svg style="left:98px;top:364px" width="13" height="13" viewBox="0 0 13 13"><path d="M0 13L13 0v13z" fill="#f5a21c"/></svg>
<svg style="left:122px;top:362px" width="17" height="17" viewBox="0 0 17 17"><path d="M7 11.500H.5V1.500h4.500l1.200 1.500h6.300v4.500" fill="none" stroke="#606060"/><path d="M.5 1.500h4.500l1.200 1.500-1.200 1.200H.5z" fill="#cfcfcf" stroke="#606060" stroke-width=".8"/><path d="M12 8l4 2.200v3.800l-4 2.200-4-2.200v-3.800z" fill="#3d8fd6"/><path d="M12 8l4 2.200-4 2.400-4-2.400z" fill="#fbfdff" stroke="#555" stroke-width=".7" stroke-linejoin="round"/><path d="M12 12.600v3.600l-4-2.200v-3.800z" fill="#5aa6e4"/></svg>
<div class="rt" style="left:152.5px;top:365.5px">Setup</div>
<div class="row" style="left:69px;top:384.5px;width:101px;height:20px;background:#f2f2f2"></div>
<svg style="left:52px;top:390px" width="7" height="10" viewBox="0 0 7 10"><path d="M1 .8l4.400 4.200-4.400 4.200" fill="none" stroke="#5a5a5a" stroke-width="1.050"/></svg>
<svg style="left:72px;top:388.5px" width="16" height="13" viewBox="0 0 16 13"><path d="M.5 6.500q7.500-9 15 0q-7.500 9-15 0z" fill="#6b6b6b"/><circle cx="8" cy="6.500" r="3.100" fill="#f0f0f0"/><circle cx="8" cy="6.500" r="1.700" fill="#6b6b6b"/></svg>
<svg style="left:97.5px;top:387.5px" width="15" height="15" viewBox="0 0 15 15"><circle cx="7.500" cy="7.500" r="6.500" fill="#fbfff4" stroke="#8ab833" stroke-width="1"/><path d="M4.200 7.800l2.500 2.700 4.300-5.500" fill="none" stroke="#8ab833" stroke-width="1.300"/></svg>
<svg style="left:122px;top:386px" width="17" height="17" viewBox="0 0 17 17"><path d="M7 11.500H.5V1.500h4.500l1.200 1.500h6.300v4.500" fill="none" stroke="#606060"/><path d="M.5 1.500h4.500l1.200 1.500-1.200 1.200H.5z" fill="#cfcfcf" stroke="#606060" stroke-width=".8"/><path d="M12 8l4 2.200v3.800l-4 2.200-4-2.200v-3.800z" fill="#3d8fd6"/><path d="M12 8l4 2.200-4 2.400-4-2.400z" fill="#fbfdff" stroke="#555" stroke-width=".7" stroke-linejoin="round"/><path d="M12 12.600v3.600l-4-2.200v-3.800z" fill="#5aa6e4"/></svg>
<div class="rt" style="left:152.5px;top:389.5px">Setup</div>
<div class="row" style="left:69px;top:408.5px;width:101px;height:20px;background:#f2f2f2"></div>
<svg style="left:50px;top:416px" width="10" height="7" viewBox="0 0 10 7"><path d="M.8 1l4.200 4.400 4.200-4.400" fill="none" stroke="#3c3c3c" stroke-width="1.300"/></svg>
<svg style="left:72px;top:412.5px" width="16" height="13" viewBox="0 0 16 13"><path d="M.5 6.500q7.500-9 15 0q-7.500 9-15 0z" fill="#6b6b6b"/><circle cx="8" cy="6.500" r="3.100" fill="#f0f0f0"/><circle cx="8" cy="6.500" r="1.700" fill="#6b6b6b"/></svg>
<svg style="left:97.5px;top:411.5px" width="15" height="15" viewBox="0 0 15 15"><circle cx="7.500" cy="7.500" r="6.500" fill="#fbfff4" stroke="#8ab833" stroke-width="1"/><path d="M4.200 7.800l2.500 2.700 4.300-5.500" fill="none" stroke="#8ab833" stroke-width="1.300"/></svg>
<div class="abs" style="left:118px;top:408px;width:60px;height:22px;background:#e3f1fb;border:1.500px solid #62b0ea;border-radius:2px"></div>
<svg style="left:122px;top:410px" width="17" height="17" viewBox="0 0 17 17"><path d="M7 11.500H.5V1.500h4.500l1.200 1.500h6.300v4.500" fill="none" stroke="#606060"/><path d="M.5 1.500h4.500l1.200 1.500-1.200 1.200H.5z" fill="#cfcfcf" stroke="#606060" stroke-width=".8"/><path d="M12 8l4 2.200v3.800l-4 2.200-4-2.200v-3.800z" fill="#3d8fd6"/><path d="M12 8l4 2.200-4 2.400-4-2.400z" fill="#fbfdff" stroke="#555" stroke-width=".7" stroke-linejoin="round"/><path d="M12 12.600v3.600l-4-2.200v-3.800z" fill="#5aa6e4"/></svg>
<div class="rt" style="left:152.5px;top:413.5px;font-weight:700">Setup</div>
<div class="row" style="left:69px;top:600.5px;width:101px;height:20px;background:#f2f2f2"></div>
<svg style="left:50px;top:608px" width="10" height="7" viewBox="0 0 10 7"><path d="M.8 1l4.200 4.400 4.200-4.400" fill="none" stroke="#3c3c3c" stroke-width="1.300"/></svg>
<svg style="left:72px;top:604.5px" width="16" height="13" viewBox="0 0 16 13"><path d="M.5 6.500q7.500-9 15 0q-7.500 9-15 0z" fill="#6b6b6b"/><circle cx="8" cy="6.500" r="3.100" fill="#f0f0f0"/><circle cx="8" cy="6.500" r="1.700" fill="#6b6b6b"/></svg>
<svg style="left:97.5px;top:603.5px" width="15" height="15" viewBox="0 0 15 15"><circle cx="7.500" cy="7.500" r="6.500" fill="#fbfff4" stroke="#8ab833" stroke-width="1"/><path d="M4.200 7.800l2.500 2.700 4.300-5.500" fill="none" stroke="#8ab833" stroke-width="1.300"/></svg>
<svg style="left:122px;top:602px" width="17" height="17" viewBox="0 0 17 17"><path d="M7 11.500H.5V1.500h4.500l1.200 1.500h6.300v4.500" fill="none" stroke="#606060"/><path d="M.5 1.500h4.500l1.200 1.500-1.200 1.200H.5z" fill="#cfcfcf" stroke="#606060" stroke-width=".8"/><path d="M12 8l4 2.200v3.800l-4 2.200-4-2.200v-3.800z" fill="#3d8fd6"/><path d="M12 8l4 2.200-4 2.400-4-2.400z" fill="#fbfdff" stroke="#555" stroke-width=".7" stroke-linejoin="round"/><path d="M12 12.600v3.600l-4-2.200v-3.800z" fill="#5aa6e4"/></svg>
<div class="rt" style="left:152.5px;top:605.5px">Setup</div>
<div class="row" style="left:87px;top:432.5px;width:83px;height:20px;background:#f2f2f2"></div>
<svg style="left:70px;top:438px" width="7" height="10" viewBox="0 0 7 10"><path d="M1 .8l4.400 4.200-4.400 4.200" fill="none" stroke="#5a5a5a" stroke-width="1.050"/></svg>
<svg style="left:90px;top:436.5px" width="16" height="13" viewBox="0 0 16 13"><path d="M1 6.500q7-8 14 0q-7 8-14 0z" fill="none" stroke="#808080" stroke-width="1"/><circle cx="8" cy="6.500" r="2.700" fill="none" stroke="#808080"/><path d="M3.500 .5l9.500 12" stroke="#808080" stroke-width="1.100"/></svg>
<svg style="left:115.5px;top:435.5px" width="15" height="15" viewBox="0 0 15 15"><circle cx="7.500" cy="7.500" r="6.500" fill="#fbfff4" stroke="#8ab833" stroke-width="1"/><path d="M4.200 7.800l2.500 2.700 4.300-5.500" fill="none" stroke="#8ab833" stroke-width="1.300"/></svg>
<svg style="left:140px;top:435px" width="16" height="16" viewBox="0 0 16 16"><defs><linearGradient id="pl" x1="0" y1="0" x2="1" y2="0"><stop offset="0" stop-color="#e9e9e9"/><stop offset=".6" stop-color="#f4f8fc"/><stop offset="1" stop-color="#c4e0f7"/></linearGradient></defs><path d="M.5 11.700V8L5 2.300H15.500V5.400L10.900 11.700z" fill="url(#pl)" stroke="#555" stroke-width="1" stroke-linejoin="round"/><rect x="5.700" y=".4" width="4.800" height="15" rx="2.300" fill="#d6d6d6" stroke="#777" stroke-width=".8"/><circle cx="8.100" cy="2.800" r="1.300" fill="#e8e8e8" stroke="#777" stroke-width=".6"/><circle cx="8.100" cy="13" r="1.300" fill="#e8e8e8" stroke="#777" stroke-width=".6"/><path d="M5.400 4v7.700M10.700 4v7.700" stroke="#2f8be0" stroke-width="1"/><path d="M.5 11.700H5.400M10.700 11.700h.2l4.600-6.300" fill="none" stroke="#555" stroke-width="1"/></svg>
<div class="row" style="left:87px;top:456.5px;width:83px;height:20px;background:#f2f2f2"></div>
<svg style="left:70px;top:462px" width="7" height="10" viewBox="0 0 7 10"><path d="M1 .8l4.400 4.200-4.400 4.200" fill="none" stroke="#5a5a5a" stroke-width="1.050"/></svg>
<svg style="left:90px;top:460.5px" width="16" height="13" viewBox="0 0 16 13"><path d="M1 6.500q7-8 14 0q-7 8-14 0z" fill="none" stroke="#808080" stroke-width="1"/><circle cx="8" cy="6.500" r="2.700" fill="none" stroke="#808080"/><path d="M3.500 .5l9.500 12" stroke="#808080" stroke-width="1.100"/></svg>
<svg style="left:115.5px;top:459.5px" width="15" height="15" viewBox="0 0 15 15"><circle cx="7.500" cy="7.500" r="6.500" fill="#fbfff4" stroke="#8ab833" stroke-width="1"/><path d="M4.200 7.800l2.500 2.700 4.300-5.500" fill="none" stroke="#8ab833" stroke-width="1.300"/></svg>
<svg style="left:140px;top:459px" width="16" height="16" viewBox="0 0 16 16"><defs><linearGradient id="pl" x1="0" y1="0" x2="1" y2="0"><stop offset="0" stop-color="#e9e9e9"/><stop offset=".6" stop-color="#f4f8fc"/><stop offset="1" stop-color="#c4e0f7"/></linearGradient></defs><path d="M.5 11.700V8L5 2.300H15.500V5.400L10.900 11.700z" fill="url(#pl)" stroke="#555" stroke-width="1" stroke-linejoin="round"/><rect x="5.700" y=".4" width="4.800" height="15" rx="2.300" fill="#d6d6d6" stroke="#777" stroke-width=".8"/><circle cx="8.100" cy="2.800" r="1.300" fill="#e8e8e8" stroke="#777" stroke-width=".6"/><circle cx="8.100" cy="13" r="1.300" fill="#e8e8e8" stroke="#777" stroke-width=".6"/><path d="M5.400 4v7.700M10.700 4v7.700" stroke="#2f8be0" stroke-width="1"/><path d="M.5 11.700H5.400M10.700 11.700h.2l4.600-6.300" fill="none" stroke="#555" stroke-width="1"/></svg>
<div class="row" style="left:87px;top:480.5px;width:83px;height:20px;background:#f2f2f2"></div>
<svg style="left:70px;top:486px" width="7" height="10" viewBox="0 0 7 10"><path d="M1 .8l4.400 4.200-4.400 4.200" fill="none" stroke="#5a5a5a" stroke-width="1.050"/></svg>
<svg style="left:90px;top:484.5px" width="16" height="13" viewBox="0 0 16 13"><path d="M1 6.500q7-8 14 0q-7 8-14 0z" fill="none" stroke="#808080" stroke-width="1"/><circle cx="8" cy="6.500" r="2.700" fill="none" stroke="#808080"/><path d="M3.500 .5l9.500 12" stroke="#808080" stroke-width="1.100"/></svg>
<svg style="left:115.5px;top:483.5px" width="15" height="15" viewBox="0 0 15 15"><circle cx="7.500" cy="7.500" r="6.500" fill="#fbfff4" stroke="#8ab833" stroke-width="1"/><path d="M4.200 7.800l2.500 2.700 4.300-5.500" fill="none" stroke="#8ab833" stroke-width="1.300"/></svg>
<svg style="left:140px;top:483px" width="16" height="16" viewBox="0 0 16 16"><path d="M2.500 3v10.500q5.500 3 11 0V3" fill="#c4dff5" stroke="#6a7a8a" stroke-width=".9"/><ellipse cx="8" cy="3" rx="5.500" ry="2.200" fill="#eef6fd" stroke="#6a7a8a" stroke-width=".9"/><path d="M2.500 6q5.500 3 11 0M2.500 8.700q5.500 3 11 0M2.500 11.400q5.500 3 11 0" fill="none" stroke="#5a9ad6" stroke-width=".9"/></svg>
<div class="row" style="left:87px;top:504.5px;width:83px;height:20px;background:#f2f2f2"></div>
<svg style="left:70px;top:510px" width="7" height="10" viewBox="0 0 7 10"><path d="M1 .8l4.400 4.200-4.400 4.200" fill="none" stroke="#5a5a5a" stroke-width="1.050"/></svg>
<svg style="left:90px;top:508.5px" width="16" height="13" viewBox="0 0 16 13"><path d="M1 6.500q7-8 14 0q-7 8-14 0z" fill="none" stroke="#808080" stroke-width="1"/><circle cx="8" cy="6.500" r="2.700" fill="none" stroke="#808080"/><path d="M3.500 .5l9.500 12" stroke="#808080" stroke-width="1.100"/></svg>
<svg style="left:115.5px;top:507.5px" width="15" height="15" viewBox="0 0 15 15"><circle cx="7.500" cy="7.500" r="6.500" fill="#fbfff4" stroke="#8ab833" stroke-width="1"/><path d="M4.200 7.800l2.500 2.700 4.300-5.500" fill="none" stroke="#8ab833" stroke-width="1.300"/></svg>
<svg style="left:140px;top:507px" width="16" height="16" viewBox="0 0 16 16"><defs><linearGradient id="pl" x1="0" y1="0" x2="1" y2="0"><stop offset="0" stop-color="#e9e9e9"/><stop offset=".6" stop-color="#f4f8fc"/><stop offset="1" stop-color="#c4e0f7"/></linearGradient></defs><path d="M.5 11.700V8L5 2.300H15.500V5.400L10.900 11.700z" fill="url(#pl)" stroke="#555" stroke-width="1" stroke-linejoin="round"/><rect x="5.700" y=".4" width="4.800" height="15" rx="2.300" fill="#d6d6d6" stroke="#777" stroke-width=".8"/><circle cx="8.100" cy="2.800" r="1.300" fill="#e8e8e8" stroke="#777" stroke-width=".6"/><circle cx="8.100" cy="13" r="1.300" fill="#e8e8e8" stroke="#777" stroke-width=".6"/><path d="M5.400 4v7.700M10.700 4v7.700" stroke="#2f8be0" stroke-width="1"/><path d="M.5 11.700H5.400M10.700 11.700h.2l4.600-6.300" fill="none" stroke="#555" stroke-width="1"/></svg>
<div class="row" style="left:87px;top:528.5px;width:83px;height:20px;background:#f2f2f2"></div>
<svg style="left:70px;top:534px" width="7" height="10" viewBox="0 0 7 10"><path d="M1 .8l4.400 4.200-4.400 4.200" fill="none" stroke="#5a5a5a" stroke-width="1.050"/></svg>
<svg style="left:90px;top:532.5px" width="16" height="13" viewBox="0 0 16 13"><path d="M1 6.500q7-8 14 0q-7 8-14 0z" fill="none" stroke="#808080" stroke-width="1"/><circle cx="8" cy="6.500" r="2.700" fill="none" stroke="#808080"/><path d="M3.500 .5l9.500 12" stroke="#808080" stroke-width="1.100"/></svg>
<svg style="left:115.5px;top:531.5px" width="15" height="15" viewBox="0 0 15 15"><circle cx="7.500" cy="7.500" r="6.500" fill="#fbfff4" stroke="#8ab833" stroke-width="1"/><path d="M4.200 7.800l2.500 2.700 4.300-5.500" fill="none" stroke="#8ab833" stroke-width="1.300"/></svg>
<svg style="left:140px;top:531px" width="16" height="16" viewBox="0 0 16 16"><defs><linearGradient id="pl" x1="0" y1="0" x2="1" y2="0"><stop offset="0" stop-color="#e9e9e9"/><stop offset=".6" stop-color="#f4f8fc"/><stop offset="1" stop-color="#c4e0f7"/></linearGradient></defs><path d="M.5 11.700V8L5 2.300H15.500V5.400L10.900 11.700z" fill="url(#pl)" stroke="#555" stroke-width="1" stroke-linejoin="round"/><rect x="5.700" y=".4" width="4.800" height="15" rx="2.300" fill="#d6d6d6" stroke="#777" stroke-width=".8"/><circle cx="8.100" cy="2.800" r="1.300" fill="#e8e8e8" stroke="#777" stroke-width=".6"/><circle cx="8.100" cy="13" r="1.300" fill="#e8e8e8" stroke="#777" stroke-width=".6"/><path d="M5.400 4v7.700M10.700 4v7.700" stroke="#2f8be0" stroke-width="1"/><path d="M.5 11.700H5.400M10.700 11.700h.2l4.600-6.300" fill="none" stroke="#555" stroke-width="1"/></svg>
<div class="row" style="left:87px;top:552.5px;width:83px;height:20px;background:#f2f2f2"></div>
<svg style="left:70px;top:558px" width="7" height="10" viewBox="0 0 7 10"><path d="M1 .8l4.400 4.200-4.400 4.200" fill="none" stroke="#5a5a5a" stroke-width="1.050"/></svg>
<svg style="left:90px;top:556.5px" width="16" height="13" viewBox="0 0 16 13"><path d="M1 6.500q7-8 14 0q-7 8-14 0z" fill="none" stroke="#808080" stroke-width="1"/><circle cx="8" cy="6.500" r="2.700" fill="none" stroke="#808080"/><path d="M3.500 .5l9.500 12" stroke="#808080" stroke-width="1.100"/></svg>
<svg style="left:115.5px;top:555.5px" width="15" height="15" viewBox="0 0 15 15"><circle cx="7.500" cy="7.500" r="6.500" fill="#fbfff4" stroke="#8ab833" stroke-width="1"/><path d="M4.200 7.800l2.500 2.700 4.300-5.500" fill="none" stroke="#8ab833" stroke-width="1.300"/></svg>
<svg style="left:140px;top:555px" width="16" height="16" viewBox="0 0 16 16"><path d="M1 10l7-6 7 6-7 5.500z" fill="#2a6db8"/><path d="M1 8.500l7-6 7 6-7 5.500z" fill="#6aaee8"/><path d="M1 7l7-6 7 6-7 5.500z" fill="#fff" stroke="#333" stroke-width=".9" stroke-linejoin="round"/></svg>
<div class="row" style="left:87px;top:576.5px;width:83px;height:20px;background:#f2f2f2"></div>
<svg style="left:70px;top:582px" width="7" height="10" viewBox="0 0 7 10"><path d="M1 .8l4.400 4.200-4.400 4.200" fill="none" stroke="#5a5a5a" stroke-width="1.050"/></svg>
<svg style="left:90px;top:580.5px" width="16" height="13" viewBox="0 0 16 13"><path d="M1 6.500q7-8 14 0q-7 8-14 0z" fill="none" stroke="#808080" stroke-width="1"/><circle cx="8" cy="6.500" r="2.700" fill="none" stroke="#808080"/><path d="M3.500 .5l9.500 12" stroke="#808080" stroke-width="1.100"/></svg>
<svg style="left:115.5px;top:579.5px" width="15" height="15" viewBox="0 0 15 15"><circle cx="7.500" cy="7.500" r="6.500" fill="#fbfff4" stroke="#8ab833" stroke-width="1"/><path d="M4.200 7.800l2.500 2.700 4.300-5.500" fill="none" stroke="#8ab833" stroke-width="1.300"/></svg>
<svg style="left:140px;top:579px" width="16" height="16" viewBox="0 0 16 16"><ellipse cx="8" cy="12" rx="6" ry="2.800" fill="#2f7fd0"/><ellipse cx="8" cy="8.500" rx="6" ry="2.800" fill="#4a97e0" stroke="#fff" stroke-width=".7"/><ellipse cx="8" cy="5" rx="6" ry="2.800" fill="#4a97e0" stroke="#fff" stroke-width=".7"/><ellipse cx="8" cy="3" rx="5" ry="2.300" fill="#f2f2f2" stroke="#888" stroke-width=".8"/></svg>
<div class="row" style="left:87px;top:624.5px;width:175px;height:20px;background:#f2f2f2"></div>
<svg style="left:70px;top:630px" width="7" height="10" viewBox="0 0 7 10"><path d="M1 .8l4.400 4.200-4.400 4.200" fill="none" stroke="#5a5a5a" stroke-width="1.050"/></svg>
<svg style="left:90px;top:628.5px" width="16" height="13" viewBox="0 0 16 13"><path d="M1 6.500q7-8 14 0q-7 8-14 0z" fill="none" stroke="#808080" stroke-width="1"/><circle cx="8" cy="6.500" r="2.700" fill="none" stroke="#808080"/><path d="M3.500 .5l9.500 12" stroke="#808080" stroke-width="1.100"/></svg>
<svg style="left:115.5px;top:627.5px" width="15" height="15" viewBox="0 0 15 15"><circle cx="7.500" cy="7.500" r="6.500" fill="#fbfff4" stroke="#8ab833" stroke-width="1"/><path d="M4.200 7.800l2.500 2.700 4.300-5.500" fill="none" stroke="#8ab833" stroke-width="1.300"/></svg>
<svg style="left:140px;top:627px" width="16" height="16" viewBox="0 0 16 16"><path d="M2.500 3v10.500q5.500 3 11 0V3" fill="#c4dff5" stroke="#6a7a8a" stroke-width=".9"/><ellipse cx="8" cy="3" rx="5.500" ry="2.200" fill="#eef6fd" stroke="#6a7a8a" stroke-width=".9"/><path d="M2.500 6q5.500 3 11 0M2.500 8.700q5.500 3 11 0M2.500 11.400q5.500 3 11 0" fill="none" stroke="#5a9ad6" stroke-width=".9"/></svg>
<div class="rt" style="left:170px;top:629.5px">[T10] Bore1 (5)</div>


<!-- MENU -->
<div id="menu" class="abs">
<div class="abs" style="left:4px;top:155.5px;width:231px;height:24.500px;background:#ebebeb"></div>
<div class="sep" style="top:2.7px"></div>
<div class="sep" style="top:103.7px"></div>
<div class="sep" style="top:180.7px"></div>
<div class="sep" style="top:305.7px"></div>
<div class="sep" style="top:406.7px"></div>
<div class="sep" style="top:507.7px"></div>
<div class="sep" style="top:533.7px"></div>
<div class="sep" style="top:584.7px"></div>
<div class="mi" style="top:10.6px">New Operation</div>
<div class="arr" style="top:11.5px"></div>
<div class="mi" style="top:35.6px">Create From Template</div>
<div class="arr" style="top:36.5px"></div>
<svg style="left:3px;top:32.5px" width="17" height="17" viewBox="0 0 16 16"><path d="M1.800 .5h7.700l4 4v10.800h-11.700z" fill="#fff" stroke="#555"/><path d="M9.500 .5v4h4" fill="#e8e8e8" stroke="#555"/><path d="M4.500 9l3.500-3.500 3 3-3.500 3.500z" fill="#a9d0f3" stroke="#2f7fd0" stroke-width="1"/><path d="M6 9.300l2.800-2.800M7.200 10.500l2.800-2.800" stroke="#2f7fd0" stroke-width=".8"/></svg>
<div class="mi" style="top:60.6px">Create NC Program</div>
<svg style="left:3px;top:57.5px" width="17" height="17" viewBox="0 0 16 16"><rect x="1.800" y=".8" width="12.700" height="14.400" fill="#fff" stroke="#555"/><text x="6" y="6.800" font-size="6" font-weight="700" fill="#2f7fd0" font-family="Liberation Sans">G</text><path d="M3.800 9.300h1.400M6.800 9.300h5.700M3.800 12.300h1.400M6.800 12.300h5.700" stroke="#444" stroke-width="1.200"/></svg>
<div class="mi" style="top:85.6px">New Folder</div>
<svg style="left:3px;top:82.5px" width="17" height="17" viewBox="0 0 16 16"><path d="M1 2.500h5.500l1.300 1.800h7v9.700H1z" fill="#fcfcfc" stroke="#555"/><path d="M1 4.300h6.800" stroke="#555" stroke-width=".8"/><path d="M1.500 3h4.800l.9 1.300H1.500z" fill="#d8d8d8"/></svg>
<div class="mi" style="top:111.6px">Generate</div>
<div class="ms" style="top:111.6px">Ctrl+G</div>
<svg style="left:3px;top:108.5px" width="17" height="17" viewBox="0 0 16 16"><path d="M1 7.5l7-4.5 7 4.5-7 5z" fill="#d6e9f8" stroke="#888"/><path d="M4.5 7.5l3.5-2.3 3.5 2.3-3.5 2.5z" fill="#fff" stroke="#3a8ad6" stroke-width="1.2"/><path d="M1 7.5v2l7 5 7-5v-2" fill="none" stroke="#999" stroke-width=".8"/></svg>
<div class="mi" style="top:136.6px">Simulate</div>
<svg style="left:3px;top:133.5px" width="17" height="17" viewBox="0 0 16 16"><path d="M1.5 10.5l6.5-4 6.5 4-6.5 4.5z" fill="#fff" stroke="#3a8ad6" stroke-width="1.2"/><rect x="5.5" y="1" width="5" height="3.5" rx="1" fill="#bbb" stroke="#555" stroke-width=".8"/><rect x="6.5" y="4.5" width="3" height="6.5" fill="#999" stroke="#555" stroke-width=".8"/></svg>
<div class="mi" style="top:161.6px">Post Process</div>
<svg style="left:3px;top:158.5px" width="17" height="17" viewBox="0 0 16 16"><rect x="1.800" y=".8" width="12.700" height="14.400" fill="#fff" stroke="#666"/><text x="4" y="7.300" font-size="5.500" font-weight="700" fill="#2f7fd0" font-family="Liberation Sans">G1</text><text x="4" y="13.300" font-size="5.500" font-weight="700" fill="#2f7fd0" font-family="Liberation Sans">G2</text></svg>
<div class="mi" style="top:187.6px">Setup Sheet</div>
<svg style="left:3px;top:184.5px" width="17" height="17" viewBox="0 0 16 16"><rect x="2.500" y=".8" width="11" height="14.400" fill="#fff" stroke="#555"/><path d="M4.800 4h6.500M4.800 6.800h6.500M4.800 9.500h6.500M4.800 12.200h4.500" stroke="#555" stroke-width="1"/></svg>
<div class="mi" style="top:212.6px">Clear Toolpath</div>
<svg style="left:3px;top:209.5px" width="17" height="17" viewBox="0 0 16 16"><path d="M14.500 2.500H4a3 3 0 000 7.500H10.500" fill="none" stroke="#2f86dc" stroke-width="1.300"/><path d="M13.300 1.500l-1.300 7" stroke="#555" stroke-width="1"/><path d="M12 8l3 6.500H8.500z" fill="#f2a01e"/></svg>
<div class="mi" style="top:237.6px">Machining Time</div>
<svg style="left:3px;top:234.5px" width="17" height="17" viewBox="0 0 16 16"><circle cx="8" cy="8" r="7" fill="#fff" stroke="#666" stroke-width="1.100"/><path d="M8 1.600A6.400 6.400 0 018 14.400z" fill="#b9d9f4"/><path d="M8 3.500V8.300l3.300 2.200" fill="none" stroke="#2f7fd0" stroke-width="1.400"/></svg>
<div class="mi" style="top:262.6px">Show All</div>
<svg style="left:3px;top:259.5px" width="17" height="17" viewBox="0 0 16 16"><path d="M0 8q8-9.500 16 0q-8 9.500-16 0z" fill="#686868"/><circle cx="8" cy="8" r="3.300" fill="#fff"/><circle cx="8" cy="8" r="1.900" fill="#686868"/></svg>
<div class="mi" style="top:287.6px">Hide All</div>
<svg style="left:3px;top:284.5px" width="17" height="17" viewBox="0 0 16 16"><path d="M.5 8q7.500-8.500 15 0q-7.500 8.500-15 0z" fill="none" stroke="#777" stroke-width="1"/><path d="M3 8q5-5 10 0q-5 5-10 0z" fill="none" stroke="#777" stroke-width=".9"/><path d="M2.500 2l11 12.500" stroke="#777" stroke-width="1.100"/></svg>
<div class="mi" style="top:313.6px">Save Parameters</div>
<svg style="left:3px;top:310.5px" width="17" height="17" viewBox="0 0 16 16"><text x="0" y="10" font-size="13" font-style="italic" fill="#555" font-family="Liberation Serif">f</text><text x="5.500" y="7" font-size="7" font-style="italic" fill="#555" font-family="Liberation Serif">x</text><rect x="7.500" y="8.500" width="7.500" height="7" fill="#4a4a4a"/><rect x="9.300" y="8.500" width="3.800" height="2.300" fill="#fff"/><rect x="9" y="12.500" width="4.500" height="3" fill="#e0e0e0"/></svg>
<div class="mi" style="top:338.6px">Suppress</div>
<svg style="left:3px;top:335.5px" width="17" height="17" viewBox="0 0 16 16"><rect x="1.500" y="1" width="13" height="13" fill="#fbfdff" stroke="#66788a" stroke-width="1.200"/><path d="M2.500 13V2h11" fill="none" stroke="#c5d3e0" stroke-width="1"/></svg>
<div class="mi" style="top:363.6px">Protect</div>
<svg style="left:3px;top:360.5px" width="17" height="17" viewBox="0 0 16 16"><rect x="1.500" y="1" width="13" height="13" fill="#fbfdff" stroke="#66788a" stroke-width="1.200"/><path d="M2.500 13V2h11" fill="none" stroke="#c5d3e0" stroke-width="1"/></svg>
<div class="mi" style="top:388.6px">Optional</div>
<svg style="left:3px;top:385.5px" width="17" height="17" viewBox="0 0 16 16"><rect x="1.500" y="1" width="13" height="13" fill="#fbfdff" stroke="#66788a" stroke-width="1.200"/><path d="M2.500 13V2h11" fill="none" stroke="#c5d3e0" stroke-width="1"/></svg>
<div class="mi" style="top:414.6px">Duplicate</div>
<div class="ms" style="top:414.6px">Ctrl+D</div>
<svg style="left:3px;top:411.5px" width="17" height="17" viewBox="0 0 16 16"><path d="M1.500 9.500v-8h8" fill="none" stroke="#555"/><rect x="4.500" y="4.500" width="10" height="10" fill="#fff" stroke="#555"/><path d="M9.500 7v5M7 9.500h5" stroke="#555"/></svg>
<div class="mi" style="top:439.6px">Cut</div>
<svg style="left:3px;top:436.5px" width="17" height="17" viewBox="0 0 16 16"><path d="M3 1.500l7 9.500M13 1.500l-7 9.500" stroke="#333" stroke-width="1.600"/><circle cx="4.500" cy="12.500" r="2.200" fill="none" stroke="#333" stroke-width="1.400"/><circle cx="11.500" cy="12.500" r="2.200" fill="none" stroke="#333" stroke-width="1.400"/></svg>
<div class="mi" style="top:464.6px">Copy</div>
<svg style="left:3px;top:461.5px" width="17" height="17" viewBox="0 0 16 16"><path d="M2.500 11.500v-10h7" fill="none" stroke="#555"/><path d="M5.500 4.500h5l3 3v7.500h-8z" fill="#fff" stroke="#555"/><path d="M10.500 4.500v3h3" fill="none" stroke="#555"/></svg>
<div class="mi" style="top:489.6px">Delete</div>
<div class="ms" style="top:489.6px">Del</div>
<svg style="left:3px;top:486.5px" width="17" height="17" viewBox="0 0 16 16"><path d="M3.500 3.500l8.500 8.500M12 3.500L3.500 12" stroke="#e8222e" stroke-width="2.800"/></svg>
<div class="mi" style="top:515.6px">Associate Named View</div>
<div class="arr" style="top:516.5px"></div>
<svg style="left:3px;top:512.5px" width="17" height="17" viewBox="0 0 16 16"><rect x="1" y="1" width="14.500" height="14.500" fill="#fff" stroke="#555"/><rect x="3" y="3" width="10.500" height="10.500" fill="#f4f4f4" stroke="#999" stroke-width=".7"/><path d="M5 5v6.500h6.500M5 5l-1 1.500M5 5l1 1.500M11.500 11.500l-1.500-1M11.500 11.500l-1.500 1M5 11.500l4-4" fill="none" stroke="#444" stroke-width=".9"/></svg>
<div class="mi" style="top:541.6px">Edit Notes</div>
<svg style="left:3px;top:538.5px" width="17" height="17" viewBox="0 0 16 16"><path d="M1.500 2.500h13v8l-3 3h-10z" fill="#fff" stroke="#555"/><path d="M14.500 10.500h-3v3z" fill="#555"/><path d="M4 6h8M4 8.500h5" stroke="#555"/></svg>
<div class="mi" style="top:566.6px">Show Log</div>
<div class="ms" style="top:566.6px">Ctrl+L</div>
<svg style="left:3px;top:563.5px" width="17" height="17" viewBox="0 0 16 16"><rect x="2" y="3" width="12" height="12" rx="1" fill="#f7f7f7" stroke="#7a8aa0"/><rect x="5" y="1" width="6" height="3.500" rx="1" fill="#e0b070" stroke="#a07030" stroke-width=".7"/><path d="M4 9l3 4 6.500-8" fill="none" stroke="#e04030" stroke-width="2"/></svg>
<div class="mi" style="top:592.6px">Expand All Children</div>
<svg style="left:3px;top:589.5px" width="17" height="17" viewBox="0 0 16 16"><rect x="2" y="1.500" width="12.500" height="13" rx="2.500" fill="#fff" stroke="#6a8ab0"/><path d="M5 4.500l3.200 3 3.200-3M5 8.500l3.200 3 3.200-3" fill="none" stroke="#2a4a80" stroke-width="1.300"/></svg>
<div class="mi" style="top:617.6px">Collapse All Children</div>
<svg style="left:3px;top:614.5px" width="17" height="17" viewBox="0 0 16 16"><rect x="2" y="1.500" width="12.500" height="13" rx="2.500" fill="#fff" stroke="#6a8ab0"/><path d="M5 7.500l3.200-3 3.200 3M5 11.500l3.200-3 3.200 3" fill="none" stroke="#2a4a80" stroke-width="1.300"/></svg>

</div>

<!-- TOOLTIP -->
<div id="tip" class="abs">Creates machine-specific NC code for the setup,
NC program, or individual operations selected in
the Browser.

Post processing converts manufacturing operations
into instructions that a machine can understand.
The output is an NC file that you can transfer to,
and then run, on a machine. Post processing
requires a post processor configuration file that
works with the machine.</div>
</body>
</html>
